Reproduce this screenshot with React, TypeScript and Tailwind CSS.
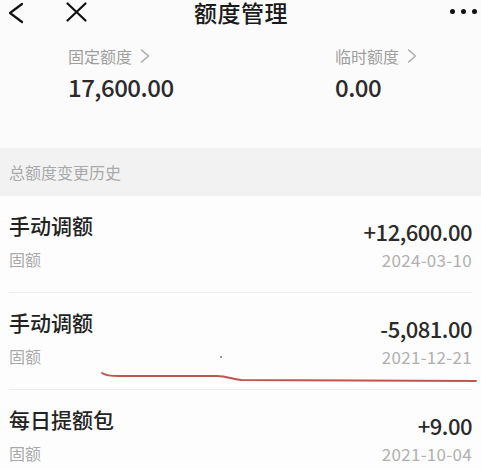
const records = [
  { title: '手动调额', amount: '+12,600.00', type: '固额', date: '2024-03-10' },
  { title: '手动调额', amount: '-5,081.00', type: '固额', date: '2021-12-21', marked: true },
  { title: '每日提额包', amount: '+9.00', type: '固额', date: '2021-10-04' },
];

function Arrow() {
  return (
    <svg className="ml-[8px]" width="10" height="14" viewBox="0 0 10 14">
      <path d="M1.5 1 L8.5 7 L1.5 13" fill="none" stroke="#a8a8a8" strokeWidth="1.4" strokeLinecap="round" strokeLinejoin="round" />
    </svg>
  );
}

function Quota({ label, value }: { label: string; value: string }) {
  return (
    <div>
      <div className="flex items-center text-[16px] leading-[22px] text-[#9e9e9e]">
        {label}
        <Arrow />
      </div>
      <div className="mt-[4px] text-[24px] leading-[32px] font-medium text-[#2a2a2a] tracking-[-0.5px]">{value}</div>
    </div>
  );
}

export default function App() {
  return (
    <div
      className="w-[481px] h-[469px] overflow-hidden bg-[#fbfbfb] text-[#222]"
      style={{ fontFamily: '"Noto Sans CJK SC", "Noto Sans", sans-serif' }}
    >
      {/* Nav bar */}
      <div className="relative h-[26px]">
        <svg className="absolute left-0 top-0" width="100" height="26" viewBox="0 0 100 26">
          <path d="M22 4 L10 13 L22 22" fill="none" stroke="#111" strokeWidth="2.2" strokeLinecap="round" strokeLinejoin="round" />
          <path d="M67.5 3.5 L85.5 20.5 M85.5 3.5 L67.5 20.5" fill="none" stroke="#111" strokeWidth="2.2" strokeLinecap="round" />
        </svg>
        <h1 className="absolute left-[194px] top-0 text-[23px] font-medium leading-[25px] tracking-[0.5px] text-[#1a1a1a]">
          额度管理
        </h1>
        <div className="absolute right-[4px] top-[9px] flex gap-[6px]">
          <span className="w-[5px] h-[5px] rounded-full bg-[#111]" />
          <span className="w-[5px] h-[5px] rounded-full bg-[#111]" />
          <span className="w-[5px] h-[5px] rounded-full bg-[#111]" />
        </div>
      </div>

      {/* Quotas */}
      <div className="flex h-[122px] pt-[19px]">
        <div className="w-[335px] pl-[68px]">
          <Quota label="固定额度" value="17,600.00" />
        </div>
        <Quota label="临时额度" value="0.00" />
      </div>

      {/* Section header */}
      <div className="h-[48px] bg-[#f2f2f2] flex items-center pl-[9px] text-[16px] text-[#a9a9a9]">
        总额度变更历史
      </div>

      {/* Records */}
      <div className="bg-[#fdfdfd]">
        {records.map((r, i) => (
          <div key={i} className="relative mx-[9px] h-[97px] border-b border-[#ececec]">
            <div className="flex justify-between pt-[13px]">
              <div>
                <div className="text-[21px] leading-[32px] font-medium text-[#222]">{r.title}</div>
                <div className="mt-[7px] text-[16px] leading-[22px] text-[#a9a9a9]">{r.type}</div>
              </div>
              <div className="flex flex-col items-end">
                <div className="mt-[7px] text-[22px] leading-[30px] font-medium text-[#2a2a2a] tracking-[-0.5px]">
                  {r.amount}
                </div>
                <div className="mt-[2px] text-[17px] leading-[24px] text-[#b0b0b0] tracking-[0.3px]">{r.date}</div>
              </div>
            </div>
            {r.marked && (
              <>
                <span className="absolute left-[211px] top-[63px] w-[2px] h-[2px] rounded-full bg-[#777]" />
                <svg className="absolute left-[90px] top-[76px]" width="382" height="14" viewBox="0 0 382 14">
                  <path
                    d="M3 4 C6 6 10 7 20 7 L118 7 C128 7 132 10 142 11 L377 12"
                    fill="none"
                    stroke="#c0554e"
                    strokeWidth="2"
                    strokeLinecap="round"
                  />
                </svg>
              </>
            )}
          </div>
        ))}
      </div>
    </div>
  );
}
